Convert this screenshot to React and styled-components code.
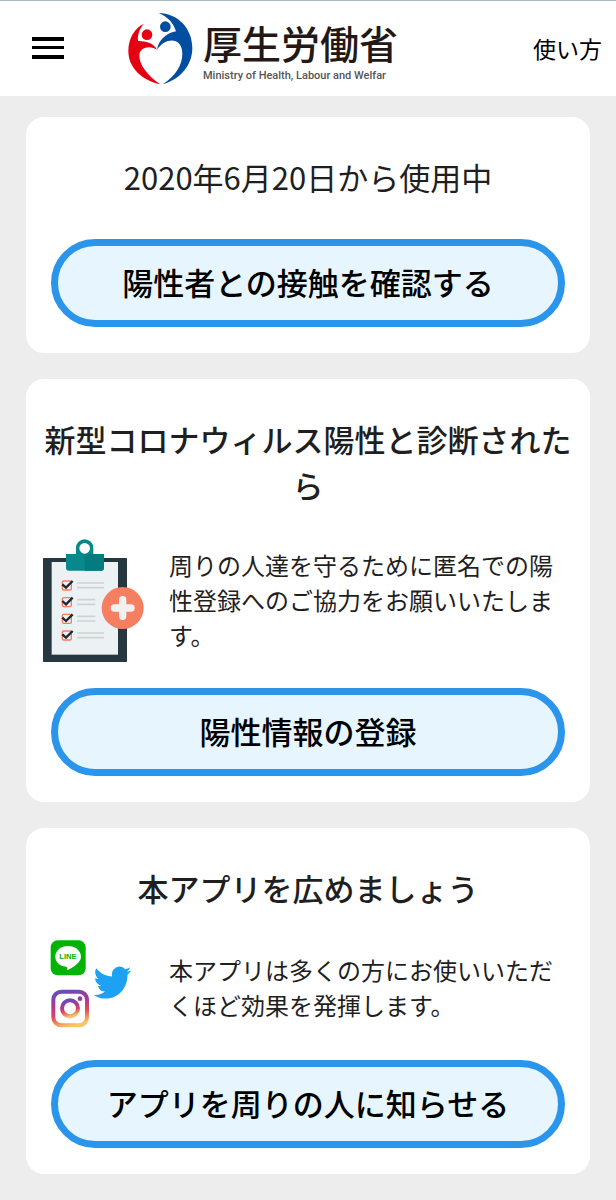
import React from 'react'
import styled, { createGlobalStyle, ThemeProvider } from 'styled-components'

const theme = {
  colors: {
    page: '#ededed',
    surface: '#ffffff',
    text: '#1f1f1f',
    black: '#000000',
    topLine: '#a9bac3',
    buttonBg: '#e6f5fe',
    buttonBorder: '#2a95ea',
  },
  font: '"Noto Sans CJK JP", "Noto Sans", sans-serif',
}

const GlobalStyle = createGlobalStyle`
  * {
    box-sizing: border-box;
  }
  body {
    margin: 0;
    background: ${({ theme }) => theme.colors.page};
    color: ${({ theme }) => theme.colors.text};
    font-family: ${({ theme }) => theme.font};
  }
  button {
    font-family: inherit;
    cursor: pointer;
  }
`

const StyledHeader = styled.header`
  display: flex;
  align-items: center;
  min-height: 96px;
  padding: 0 14px 0 24px;
  border-top: 1px solid ${({ theme }) => theme.colors.topLine};
  background: ${({ theme }) => theme.colors.surface};
`

const MenuButton = styled.button`
  display: flex;
  padding: 8px;
  border: none;
  background: none;
`

const Brand = styled.div`
  display: flex;
  align-items: center;
  gap: 9px;
  margin-left: 55px;
`

const BrandText = styled.div`
  display: flex;
  flex-direction: column;
  padding-top: 4px;
`

const BrandName = styled.span`
  font-size: 39px;
  font-weight: 500;
  line-height: 50px;
  color: #231815;
`

const BrandSub = styled.span`
  font-family: Roboto, sans-serif;
  font-size: 11px;
  font-weight: 500;
  line-height: 18px;
  white-space: nowrap;
  color: #555555;
`

const HelpLink = styled.a`
  margin-left: auto;
  padding-bottom: 2px;
  font-size: 23px;
  line-height: 32px;
  white-space: nowrap;
  color: ${({ theme }) => theme.colors.black};
  text-decoration: none;
`

const Main = styled.main`
  display: flex;
  flex-direction: column;
  gap: 26px;
  padding: 21px 26px 26px;
`

const StyledCard = styled.section`
  display: flex;
  flex-direction: column;
  padding: 37px 0 26px;
  border-radius: 18px;
  background: ${({ theme }) => theme.colors.surface};
`

const Title = styled.h2`
  margin: 0;
  padding: 0 16px;
  font-size: 31px;
  font-weight: ${({ $light }) => ($light ? 400 : 500)};
  line-height: 46px;
  text-align: center;
`

const Status = styled(Title).attrs({ as: 'p' })`
  margin-bottom: 39px;
`

const Row = styled.div`
  display: flex;
  align-items: center;
  gap: 21px;
  margin: 30px 26px 24px 16px;
  svg {
    flex: none;
    overflow: visible;
  }
`

const Description = styled.p`
  margin: 0;
  padding-bottom: 4px;
  font-size: 24px;
  line-height: 35px;
`

const ActionButton = styled.button`
  min-height: 88px;
  margin: 0 25px;
  padding: 0 16px 2px;
  border: 7px solid ${({ theme }) => theme.colors.buttonBorder};
  border-radius: 44px;
  background: ${({ theme }) => theme.colors.buttonBg};
  color: ${({ theme }) => theme.colors.black};
  font-size: 31px;
  font-weight: 500;
  line-height: 46px;
`

const MenuIcon = () => (
  <svg width="32" height="24" viewBox="0 0 32 24" aria-hidden="true">
    <path d="M0 0h32v4H0zM0 9h32v3H0zM0 18h32v4H0z" />
  </svg>
)

const BrandMark = () => (
  <svg width="67" height="75" viewBox="380 35 201 225" aria-hidden="true">
    <g fill="#e50012">
      <circle cx="440" cy="106" r="16" />
      <path d="M431 73C403 85 384 118 384 155C384 205 425 243 480 255C441 228 417 196 417 169C417 142 451 137 470 151C462 136 446 126 413 125C411 105 418 87 431 73Z" />
    </g>
    <g fill="#004ea2">
      <circle cx="495" cy="82" r="16" />
      <path d="M475 41C533 42 576 88 576 146C576 198 540 240 487 255C527 229 546 196 546 163C546 113 496 113 470 151C475 124 494 103 527 96C519 70 502 52 475 41Z" />
    </g>
  </svg>
)

const checkRows = [
  { y: 166, end: 222 },
  { y: 216, end: 196 },
  { y: 266, end: 196 },
  { y: 316, end: 222 },
]

const ClipboardIcon = () => (
  <svg width="106" height="126" viewBox="36 24 318 378" aria-hidden="true">
    <rect x="39" y="84" width="252" height="312" rx="2" fill="#263740" />
    <rect x="65" y="96" width="199" height="278" fill="#ecf2f3" />
    <path
      fill="#07888a"
      fillRule="evenodd"
      d="M108 72H138V54A26 26 0 0 1 190 54V72H222V113Q222 122 213 122H117Q108 122 108 113ZM164 39A16 16 0 1 0 164 71A16 16 0 1 0 164 39Z"
    />
    <path fill="#037b7f" d="M164 72H222V113Q222 122 213 122H164Z" />
    {checkRows.map(({ y, end }) => (
      <g key={y} fill="none">
        <rect x="97" y={y - 13} width="27" height="27" rx="4" stroke="#f27d61" strokeWidth="4" />
        <path d={`M97 ${y - 3}l11 10l20 -20`} stroke="#1d2930" strokeWidth="7" />
        <path d={`M141 ${y - 7}H${end}M141 ${y + 7}H${end}`} stroke="#cdd2d4" strokeWidth="5" />
      </g>
    ))}
    <circle cx="278" cy="234" r="63" fill="#f67e61" />
    <path d="M278 209v50M253 234h50" stroke="#f0f2f2" strokeWidth="22" strokeLinecap="round" />
  </svg>
)

const LineLabel = styled.text`
  font-family: "Liberation Sans", Arial, sans-serif;
  font-size: 23px;
  font-weight: 700;
  text-anchor: middle;
`

const SocialIcons = () => (
  <svg width="106" height="95" viewBox="6 33 318 285" aria-hidden="true">
    <defs>
      <linearGradient id="insta" x1="0.35" y1="0" x2="0.6" y2="1">
        <stop offset="0" stopColor="#6a4bb8" />
        <stop offset="0.35" stopColor="#b13596" />
        <stop offset="0.65" stopColor="#e04b5c" />
        <stop offset="1" stopColor="#fbc565" />
      </linearGradient>
    </defs>
    <rect x="32" y="31" width="105" height="105" rx="21" fill="#00b405" />
    <path
      fill="#ffffff"
      d="M84 48C62 48 46 62 46 80C46 96 59 108 78 110C83 111 82 115 81 121C98 113 123 98 123 80C123 62 106 48 84 48Z"
    />
    <LineLabel x="84" y="88" fill="#00b405">LINE</LineLabel>
    <path
      fill="#1da1f2"
      transform="translate(161 99) scale(4.7 4.9)"
      d="M23.953 4.57a10 10 0 01-2.825.775 4.958 4.958 0 002.163-2.723c-.951.555-2.005.959-3.127 1.184a4.92 4.92 0 00-8.384 4.482C7.69 8.095 4.067 6.13 1.64 3.162a4.822 4.822 0 00-.666 2.475c0 1.71.87 3.213 2.188 4.096a4.904 4.904 0 01-2.228-.616v.06a4.923 4.923 0 003.946 4.827 4.996 4.996 0 01-2.212.085 4.936 4.936 0 004.604 3.417 9.867 9.867 0 01-6.102 2.105c-.39 0-.779-.023-1.17-.067a13.995 13.995 0 007.557 2.209c9.053 0 13.998-7.496 13.998-13.985 0-.21 0-.42-.015-.63A9.935 9.935 0 0024 4.59z"
    />
    <g fill="none" stroke="url(#insta)" strokeWidth="12">
      <rect x="40" y="185" width="101" height="101" rx="24" />
      <circle cx="90" cy="235" r="24" />
    </g>
    <circle cx="120" cy="206" r="7" fill="#9c3aa0" />
  </svg>
)

const Header = () => (
  <StyledHeader>
    <MenuButton type="button" aria-label="メニュー">
      <MenuIcon />
    </MenuButton>
    <Brand>
      <BrandMark />
      <BrandText>
        <BrandName>厚生労働省</BrandName>
        <BrandSub>Ministry of Health, Labour and Welfar</BrandSub>
      </BrandText>
    </Brand>
    <HelpLink href="#help">使い方</HelpLink>
  </StyledHeader>
)

const Card = ({ title, icon, description, action }) => (
  <StyledCard>
    <Title>{title}</Title>
    <Row>
      {icon}
      <Description>{description}</Description>
    </Row>
    <ActionButton type="button">{action}</ActionButton>
  </StyledCard>
)

export default function App() {
  return (
    <ThemeProvider theme={theme}>
      <GlobalStyle />
      <Header />
      <Main>
        <StyledCard>
          <Status $light>2020年6月20日から使用中</Status>
          <ActionButton type="button">陽性者との接触を確認する</ActionButton>
        </StyledCard>
        <Card
          title="新型コロナウィルス陽性と診断されたら"
          icon={<ClipboardIcon />}
          description="周りの人達を守るために匿名での陽性登録へのご協力をお願いいたします。"
          action="陽性情報の登録"
        />
        <Card
          title="本アプリを広めましょう"
          icon={<SocialIcons />}
          description="本アプリは多くの方にお使いいただくほど効果を発揮します。"
          action="アプリを周りの人に知らせる"
        />
      </Main>
    </ThemeProvider>
  )
}
